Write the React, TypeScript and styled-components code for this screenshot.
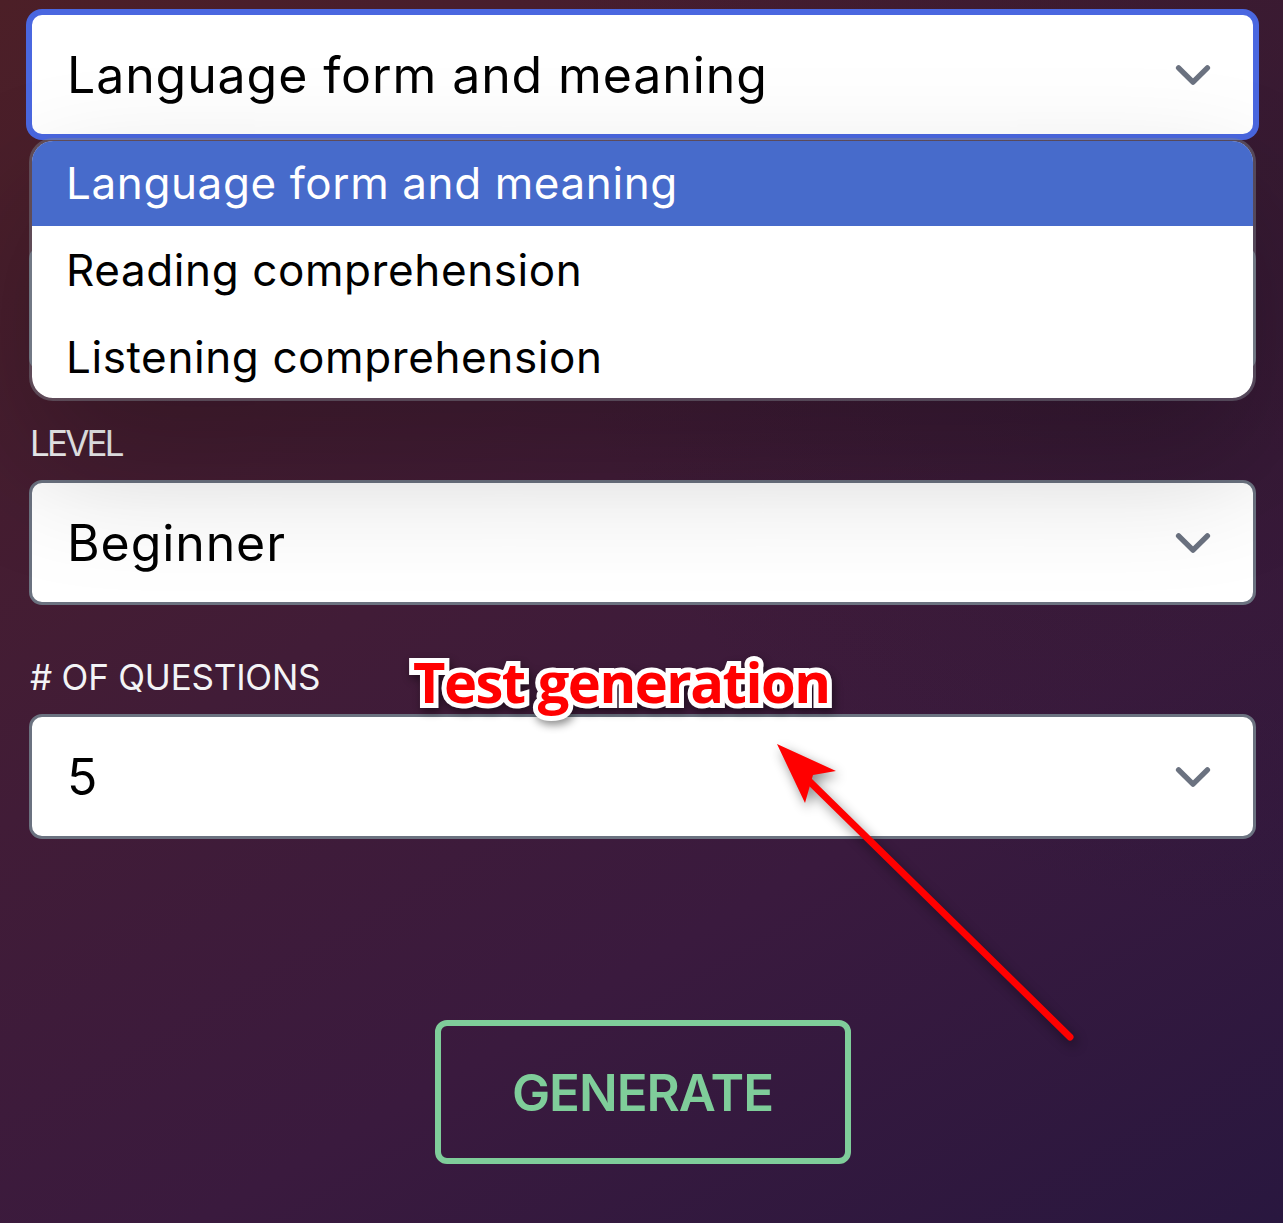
import React from 'react'
import styled, { createGlobalStyle } from 'styled-components'

const GlobalStyle = createGlobalStyle`
  html, body {
    margin: 0;
    padding: 0;
  }
  body {
    font-family: Inter, "Liberation Sans", sans-serif;
  }
`

const Page = styled.div`
  position: relative;
  box-sizing: border-box;
  width: 1283px;
  height: 1223px;
  padding: 12px 27px 0 29px;
  overflow: hidden;
  background:
    radial-gradient(circle at 100% 15%, rgba(40, 22, 40, 0.4), transparent 45%),
    linear-gradient(150deg, #4c1f27 0%, #411c37 42%, #3a1a3e 68%, #29173f 100%);
`

const Form = styled.div`
  position: relative;
  display: flex;
  flex-direction: column;
  gap: 47px;
`

const Field = styled.div`
  display: flex;
  flex-direction: column;
  gap: 12px;
`

const Label = styled.label<{ $narrow?: boolean }>`
  height: 50px;
  padding-left: 1px;
  font-size: 35px;
  line-height: 50px;
  font-weight: 400;
  letter-spacing: ${({ $narrow }) => ($narrow ? '-2.8px' : '-0.2px')};
  color: #f3f4f6;
`

const SelectBox = styled.div<{ $focused?: boolean }>`
  box-sizing: border-box;
  display: flex;
  align-items: center;
  justify-content: space-between;
  height: 125px;
  padding: 0 24px 0 35px;
  border: 3px solid ${({ $focused }) => ($focused ? '#4a67e0' : '#6b7280')};
  border-radius: 13px;
  background: #fff;
  box-shadow: ${({ $focused }) => ($focused ? '0 0 0 3px #4a67e0' : 'none')};
  font-size: 50px;
  letter-spacing: 0.9px;
  color: #000;
`

const Chevron = styled.svg`
  width: 72px;
  height: 72px;
  flex: none;
  fill: none;
  stroke: #6b7280;
  stroke-width: 1.5;
  stroke-linecap: round;
  stroke-linejoin: round;
`

const Menu = styled.ul`
  position: absolute;
  top: 126px;
  left: 0;
  right: 0;
  box-sizing: border-box;
  height: 263px;
  margin: 0;
  padding: 0;
  list-style: none;
  overflow: hidden;
  border: 3px solid rgba(125, 130, 140, 0.45);
  border-radius: 24px;
  background: #fff;
  background-clip: padding-box;
  box-shadow: 0 60px 130px rgba(0, 0, 0, 0.22);
`

const MenuItem = styled.li<{ $active?: boolean }>`
  display: flex;
  align-items: center;
  height: 87px;
  padding-left: 34px;
  font-size: 44px;
  letter-spacing: 0.6px;
  color: ${({ $active }) => ($active ? '#fff' : '#000')};
  background: ${({ $active }) => ($active ? '#476bcb' : 'transparent')};

  &:first-child {
    margin-top: -2px;
  }
`

const Actions = styled.div`
  display: flex;
  justify-content: center;
  margin-top: 181px;
`

const GenerateButton = styled.button`
  box-sizing: border-box;
  width: 416px;
  height: 144px;
  border: 6px solid #7fcd9a;
  border-radius: 12px;
  background: transparent;
  font-family: inherit;
  font-size: 51px;
  font-weight: 600;
  letter-spacing: -1px;
  color: #7fcd9a;
`

const Callout = styled.div`
  position: absolute;
  top: 643px;
  left: 413px;
  font-family: "Open Sans", "Noto Sans", sans-serif;
  font-size: 56px;
  line-height: 76px;
  font-weight: 700;
  letter-spacing: -1.5px;
  color: #ff0000;
  -webkit-text-stroke: 10px #fff;
  paint-order: stroke fill;
  filter: drop-shadow(2px 4px 4px rgba(0, 0, 0, 0.45));
`

const ArrowLayer = styled.svg`
  position: absolute;
  top: 0;
  left: 0;
  width: 1283px;
  height: 1223px;
  pointer-events: none;
  filter: drop-shadow(3px 5px 6px rgba(0, 0, 0, 0.45));
`

const ChevronDown = () => (
  <Chevron viewBox="0 0 20 20">
    <path d="M6 8l4 4 4-4" />
  </Chevron>
)

export default function App() {
  return (
    <>
      <GlobalStyle />
      <Page>
        <Form>
          <SelectBox $focused>
            Language form and meaning
            <ChevronDown />
          </SelectBox>
          <Field>
            <Label />
            <SelectBox />
          </Field>
          <Field>
            <Label $narrow>LEVEL</Label>
            <SelectBox>
              Beginner
              <ChevronDown />
            </SelectBox>
          </Field>
          <Field>
            <Label># OF QUESTIONS</Label>
            <SelectBox>
              5
              <ChevronDown />
            </SelectBox>
          </Field>
          <Menu>
            <MenuItem $active>Language form and meaning</MenuItem>
            <MenuItem>Reading comprehension</MenuItem>
            <MenuItem>Listening comprehension</MenuItem>
          </Menu>
        </Form>
        <Actions>
          <GenerateButton>GENERATE</GenerateButton>
        </Actions>
        <ArrowLayer viewBox="0 0 1283 1223">
          <line x1="1070" y1="1037" x2="806" y2="778" stroke="#ff0000" strokeWidth="7" strokeLinecap="round" />
          <polygon points="777,744 836,771 813,775 805,803" fill="#ff0000" />
        </ArrowLayer>
        <Callout>Test generation</Callout>
      </Page>
    </>
  )
}
